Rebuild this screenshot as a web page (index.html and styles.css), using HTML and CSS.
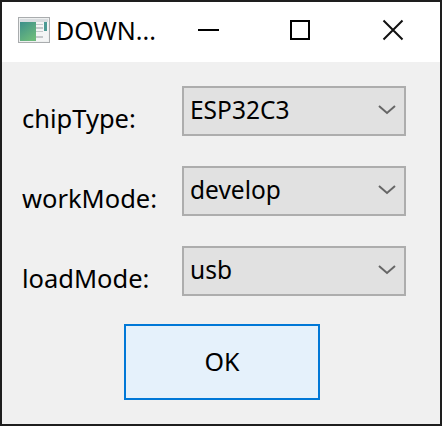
FILE: index.html
```html
<!DOCTYPE html>
<html lang="en">
<head>
    <meta charset="UTF-8">
    <title>DOWNLOAD</title>
    <link rel="stylesheet" href="styles.css">
</head>
<body>
    <div class="window">
        <div class="titlebar">
            <svg class="app-icon" width="32" height="26" viewBox="0 0 32 26">
                <defs>
                    <linearGradient id="panel" x1="0" y1="0" x2="0.6" y2="1">
                        <stop offset="0" stop-color="#3d8f8a"/>
                        <stop offset="1" stop-color="#6cba7c"/>
                    </linearGradient>
                </defs>
                <rect x="0.5" y="0.5" width="31" height="25" fill="#eef0f0" stroke="#a9acae"/>
                <rect x="2" y="2" width="28" height="3" fill="#d8dcdf"/>
                <rect x="2" y="5" width="16" height="19" fill="url(#panel)"/>
                <rect x="18" y="5" width="12" height="19" fill="#f4f5f5"/>
                <rect x="18" y="7" width="7" height="1" fill="#c4c8ca"/>
                <rect x="18" y="10" width="7" height="2" fill="#c4c8ca"/>
                <rect x="18" y="14" width="7" height="1" fill="#c4c8ca"/>
                <rect x="18" y="19" width="7" height="2" fill="#c4c8ca"/>
                <rect x="26" y="5" width="3" height="9" fill="#4c9a94"/>
            </svg>
            <span class="title">DOWN...</span>
            <div class="controls">
                <button class="ctl">
                    <svg width="22" height="22" viewBox="0 0 22 22"><path d="M0 11H21" stroke="#000" stroke-width="2"/></svg>
                </button>
                <button class="ctl">
                    <svg width="22" height="22" viewBox="0 0 22 22"><rect x="1" y="2" width="18" height="18" fill="none" stroke="#000" stroke-width="2"/></svg>
                </button>
                <button class="ctl">
                    <svg width="22" height="22" viewBox="0 0 22 22"><path d="M1.5 1.5L20.5 20.5M20.5 1.5L1.5 20.5" stroke="#111" stroke-width="2"/></svg>
                </button>
            </div>
        </div>

        <div class="content">
            <div class="form">
                <label class="field-label">chipType:</label>
                <div class="combo">
                    <span>ESP32C3</span>
                    <svg width="18" height="10" viewBox="0 0 18 10"><path d="M1 1L9 8L17 1" fill="none" stroke="#666" stroke-width="2"/></svg>
                </div>
                <label class="field-label">workMode:</label>
                <div class="combo">
                    <span>develop</span>
                    <svg width="18" height="10" viewBox="0 0 18 10"><path d="M1 1L9 8L17 1" fill="none" stroke="#666" stroke-width="2"/></svg>
                </div>
                <label class="field-label">loadMode:</label>
                <div class="combo">
                    <span>usb</span>
                    <svg width="18" height="10" viewBox="0 0 18 10"><path d="M1 1L9 8L17 1" fill="none" stroke="#666" stroke-width="2"/></svg>
                </div>
            </div>
            <button class="ok-btn">OK</button>
        </div>
    </div>
</body>
</html>
```

FILE: styles.css
```css
* {
    box-sizing: border-box;
}
body {
    margin: 0;
    font-family: 'Noto Sans', sans-serif;
    color: #000;
}
.window {
    width: 442px;
    height: 426px;
    border: 2px solid #1e1e1e;
    background-color: #f0f0f0;
    overflow: hidden;
}

/* Title bar */
.titlebar {
    display: flex;
    align-items: center;
    height: 60px;
    padding: 0 0 4px 16px;
    background-color: #fff;
}
.app-icon {
    margin-right: 6px;
}
.title {
    font-size: 25px;
}
.controls {
    display: flex;
    margin-left: auto;
    margin-right: 1px;
}
.ctl {
    display: flex;
    align-items: center;
    justify-content: center;
    width: 92px;
    height: 56px;
    padding: 0;
    border: none;
    background: none;
}

/* Form */
.content {
    padding: 24px 34px 0 20px;
}
.form {
    display: grid;
    grid-template-columns: 160px 224px;
    grid-auto-rows: 50px;
    row-gap: 30px;
}
.field-label {
    padding-top: 16px;
    font-size: 25.5px;
    line-height: 32px;
}
.combo {
    display: flex;
    align-items: center;
    justify-content: space-between;
    padding: 0 8px 3px 6px;
    border: 2px solid #adadad;
    background-color: #e1e1e1;
    font-size: 24.5px;
}
.ok-btn {
    display: block;
    width: 196px;
    height: 76px;
    margin: 28px 0 0 102px;
    padding: 0 0 2px;
    border: 2px solid #0078d7;
    background-color: #e5f1fb;
    font-family: inherit;
    font-size: 25px;
    color: #000;
}
```
